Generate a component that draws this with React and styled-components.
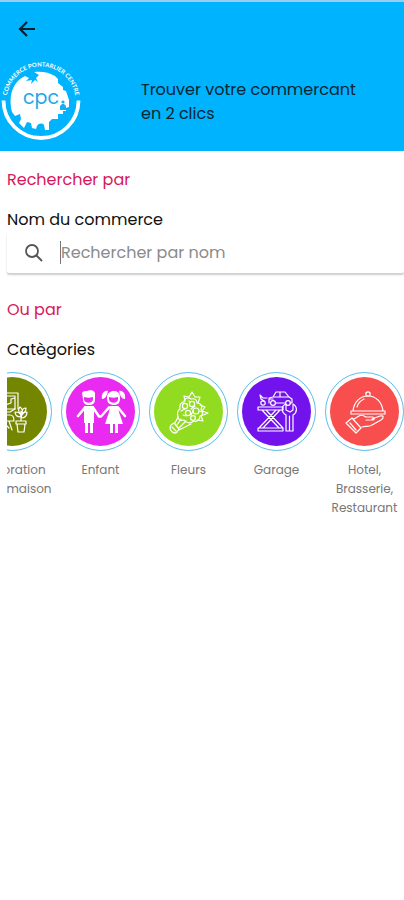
import React, { useLayoutEffect, useRef } from "react";
import styled, { createGlobalStyle } from "styled-components";

const GlobalStyle = createGlobalStyle`
  * { box-sizing: border-box; }
  body {
    margin: 0;
    background: #fff;
    color: #111;
    font-family: Poppins, Inter, sans-serif;
    font-size: 16px;
    line-height: 24px;
  }
`;

const Header = styled.header`
  background: #00b3ff;
  border-top: 2px solid #9bcdf0;
  padding-bottom: 9px;
`;

const BackButton = styled.button`
  display: flex;
  margin: 0 0 0 14px;
  padding: 14px 0 18px;
  border: 0;
  background: none;
  color: #06202c;
  cursor: pointer;
`;

const Banner = styled.div`
  display: flex;
  gap: 59px;
  align-items: flex-start;
`;

const Logo = styled.svg`
  flex: none;
  display: block;
`;

const LogoRingText = styled.text`
  font-family: Lato, sans-serif;
  font-size: 6px;
  font-weight: 700;
  fill: #fff;
`;

const LogoName = styled.text`
  font-family: Poppins, Lato, sans-serif;
  font-size: 19px;
  font-weight: 400;
  fill: #1da7e6;
`;

const Title = styled.h1`
  flex: 1;
  max-width: 232px;
  margin: 0;
  padding: 18px 0 0;
  font-size: 16px;
  font-weight: 400;
  color: #052634;
`;

const Main = styled.main`
  padding: 17px 0 0 7px;
`;

const Heading = styled.h2`
  margin: 0 0 16px;
  font-size: 16px;
  font-weight: 400;
  color: #d8175b;
`;

const FieldLabel = styled.label`
  display: block;
`;

const Subheading = styled.h3`
  margin: 0 0 10px;
  font-size: 16px;
  font-weight: 400;
`;

const SearchBox = styled.div`
  display: flex;
  align-items: center;
  gap: 17px;
  height: 41px;
  margin: 0 0 25px;
  padding: 0 8px 0 17px;
  border-radius: 2px;
  background: #fff;
  box-shadow: 0 2px 2px rgba(0, 0, 0, 0.2);
`;

const SearchInput = styled.input`
  flex: 1;
  min-width: 0;
  height: 23px;
  padding: 0;
  border: 0;
  border-left: 1px solid #777;
  outline: 0;
  background: none;
  color: #111;
  font: inherit;
  &::placeholder { color: #8b8b8b; opacity: 1; }
`;

const Categories = styled.div`
  display: flex;
  align-items: flex-start;
  gap: 9px;
  overflow-x: auto;
  scrollbar-width: none;
`;

const Category = styled.button`
  flex: none;
  width: 79px;
  padding: 0;
  border: 0;
  background: none;
  color: #777;
  font: inherit;
  font-size: 12px;
  line-height: 19px;
  text-align: center;
  white-space: pre-line;
  cursor: pointer;
`;

const Ring = styled.span`
  display: block;
  height: 79px;
  margin-bottom: 9px;
  padding: 4px;
  border: 1px solid #58bdeb;
  border-radius: 50%;
`;

const Disc = styled.span`
  display: block;
  height: 100%;
  border-radius: 50%;
  background: ${(p) => p.$color};
  svg { display: block; width: 100%; height: 100%; }
`;

function Glyph({ children }) {
  return (
    <svg viewBox="0 0 69 69" fill="none" stroke="#fff" strokeWidth="1.2" strokeLinecap="round" strokeLinejoin="round" aria-hidden="true">
      {children}
    </svg>
  );
}

const DecorationIcon = () => (
  <Glyph>
    <path d="M14 16h26v16M14 16v19M17 19h20v13H17M37 21l-4 1v4l-6 2" />
    <path d="M12 35h20l5-3M12 38h20c3 0 4 3 4 6H12M31 44l3 9M27 47l4 4M15 44l-3 9" />
    <path d="M38 44h10v3H38zM39 47l1 8h6l1-8M43 44V34M43 40c-5 0-6-3-6-5 4 0 6 2 6 5zM43 41c1-5 3-6 6-6 0 4-2 6-6 6zM43 37c-3-2-3-5-1-7 3 2 3 5 1 7zM44 36c0-4 2-5 4-5 0 3-1 5-4 5z" />
  </Glyph>
);

const ChildrenIcon = () => (
  <Glyph>
    <g fill="#fff" stroke="none">
      <path d="M16 16c1-2 3-2 5-2 4-2 9 0 8 4v4c0 4-2 6-6 6s-6-2-6-6zM18 20v2c0 5 9 5 9 0v-2c-3 1-6 1-9 0z" fillRule="evenodd" />
      <path d="M18 29h10v17h-1v10h-3V46h-2v10h-3V46h-1z" />
      <path d="M41 21c0-5 3-7 7-7s6 2 6 7c0 5-2 7-6 7s-7-2-7-7zM43 20v2c0 5 9 5 9 0v-2c-3 1-6 1-9 0z" fillRule="evenodd" />
      <path d="M42 14c-4-1-7 3-6 8 4 0 5-4 6-8zM53 14c4-1 7 3 6 8-4 0-5-4-6-8z" />
      <path d="M44 29h8l1 6 4 12h-5v9h-3v-9h-2v9h-3v-9h-5l4-12z" />
    </g>
    <path strokeWidth="2.6" d="M19 30.500L12 39M27 30.500l6 9h2l8-9M52 30.500l7 8.500" />
  </Glyph>
);

const FlowersIcon = () => (
  <Glyph>
    <path d="M24 40l-3 6M25 53l12-6M27 42l-4 6M32 44l-7 7M17 48l3-2 5 6-2 3c-3 3-9-2-6-7zM18 50l4 4" />
    <path d="M24 40c-1-4 0-7 2-8-1-4 1-7 4-7 0-4 4-5 7-3 4-1 6 1 6 4 4 0 6 3 4 6 3 3 2 6-1 7 0 4-3 6-6 5-4 3-8 2-10-1-3 1-6 0-6-3z" />
    <circle cx="31" cy="29" r="2.600" /><circle cx="38" cy="27" r="2.600" /><circle cx="34" cy="36" r="2.600" /><circle cx="42" cy="34" r="3" /><circle cx="39" cy="41" r="2.400" />
    <path d="M31 24l-1-5 5 1 3-5 3 5 5 0-2 6M46 28l5 2-3 4 6 2-7 3 2 5-6-1M27 34l4-2M37 32l4-3M37 38l2-4M29 38l3 1M35 24l1 2M46 34l2 1" />
  </Glyph>
);

const GarageIcon = () => (
  <Glyph>
    <path d="M27 26v-5l4-1 3-5h9l4 5 3 2v4h-2M34 26h9M31 20h15M38 15v5M18 18l3 3h4M18 18l1 4 3 2M28 22h3" />
    <circle cx="31" cy="26" r="2.400" /><circle cx="46" cy="26" r="2.400" /><circle cx="21" cy="26" r="2.200" />
    <path d="M16 30h25v3H16zM16 51h25v3H16zM20 33l17 18M24 33l17 18M38 33L21 51M34 33L17 51" />
    <path d="M44 38c-5-3-5-9 0-11v6l4 2 3-2v-6c5 3 4 9 0 11v16h-7zM47.500 39v15" />
  </Glyph>
);

const RestaurantIcon = () => (
  <Glyph>
    <circle cx="38" cy="17" r="2.200" />
    <path d="M23 34c1-9 7-15 15-15s14 6 15 15M21 34h34v3H21zM27 30c1-4 3-6 7-8" />
    <path d="M24 42l5-3c3-2 5 0 7 1h6c3 0 3 3 0 3h-6M42 42l8-3c4-1 4 2 1 4l-9 5c-3 2-6 1-10 2M16 46l6-5 9 10-5 5zM20 46l6 7" />
  </Glyph>
);

const categories = [
  { label: "Décoration\nde la maison", color: "#748500", Icon: DecorationIcon },
  { label: "Enfant", color: "#e92af0", Icon: ChildrenIcon },
  { label: "Fleurs", color: "#91dc20", Icon: FlowersIcon },
  { label: "Garage", color: "#7213ed", Icon: GarageIcon },
  { label: "Hotel,\nBrasserie,\nRestaurant", color: "#f84e4e", Icon: RestaurantIcon },
];

function CpcLogo() {
  return (
    <Logo width="82" height="82" viewBox="0 0 82 82" role="img" aria-label="Commerce Pontarlier Centre">
      <defs><path id="logo-arc" d="M6.500 41a34.500 34.500 0 0 1 69 0" /></defs>
      <LogoRingText textAnchor="middle"><textPath href="#logo-arc" startOffset="50%">COMMERCE PONTARLIER CENTRE</textPath></LogoRingText>
      <path d="M3.500 40.500a37.500 37.500 0 0 0 75 0" fill="none" stroke="#fff" strokeWidth="3.800" />
      <path
        fill="#fff"
        d="M25 16l4 2-3 3 6-1-1 4 4-4 3 2-2-4 3-3-5-3c7-1 15 0 21 4l3 3v4l5 4v3l3 1 3 9v7l-3 1v3h-3v3h-5v5h-6l-3 3v8h-4l-1-5c-2-2-5-2-7 1l-1 3-4-1-1-5-4-1-3 6-5-5 2-4-1-5-5 2-3-4C8 35 13 22 25 16z"
      />
      <g fill="#16aff4"><circle cx="63" cy="42" r="1.600" /><path d="M60 50v-4l2-2h2l2 2v4z" /></g>
      <LogoName x="41" y="44" textAnchor="middle">cpc</LogoName>
    </Logo>
  );
}

export default function App() {
  const listRef = useRef(null);

  useLayoutEffect(() => {
    listRef.current.scrollLeft = listRef.current.scrollWidth;
  }, []);

  return (
    <>
      <GlobalStyle />
      <Header>
        <BackButton type="button" aria-label="Retour">
          <svg width="26" height="26" viewBox="0 0 26 26" fill="none" stroke="currentColor" strokeWidth="2.2">
            <path d="M21 13H6M13 6l-7 7 7 7" />
          </svg>
        </BackButton>
        <Banner>
          <CpcLogo />
          <Title>Trouver votre commercant en 2 clics</Title>
        </Banner>
      </Header>
      <Main>
        <Heading>Rechercher par</Heading>
        <FieldLabel htmlFor="shop-name">Nom du commerce</FieldLabel>
        <SearchBox>
          <svg width="19" height="19" viewBox="0 0 19 19" fill="none" stroke="#555" strokeWidth="1.8" strokeLinecap="round" aria-hidden="true">
            <circle cx="8" cy="8" r="6" /><path d="M12.500 12.500l5 5" />
          </svg>
          <SearchInput id="shop-name" type="text" placeholder="Rechercher par nom" />
        </SearchBox>
        <Heading>Ou par</Heading>
        <Subheading>Catègories</Subheading>
        <Categories ref={listRef}>
          {categories.map(({ label, color, Icon }) => (
            <Category type="button" key={label}>
              <Ring><Disc $color={color}><Icon /></Disc></Ring>
              {label}
            </Category>
          ))}
        </Categories>
      </Main>
    </>
  );
}
